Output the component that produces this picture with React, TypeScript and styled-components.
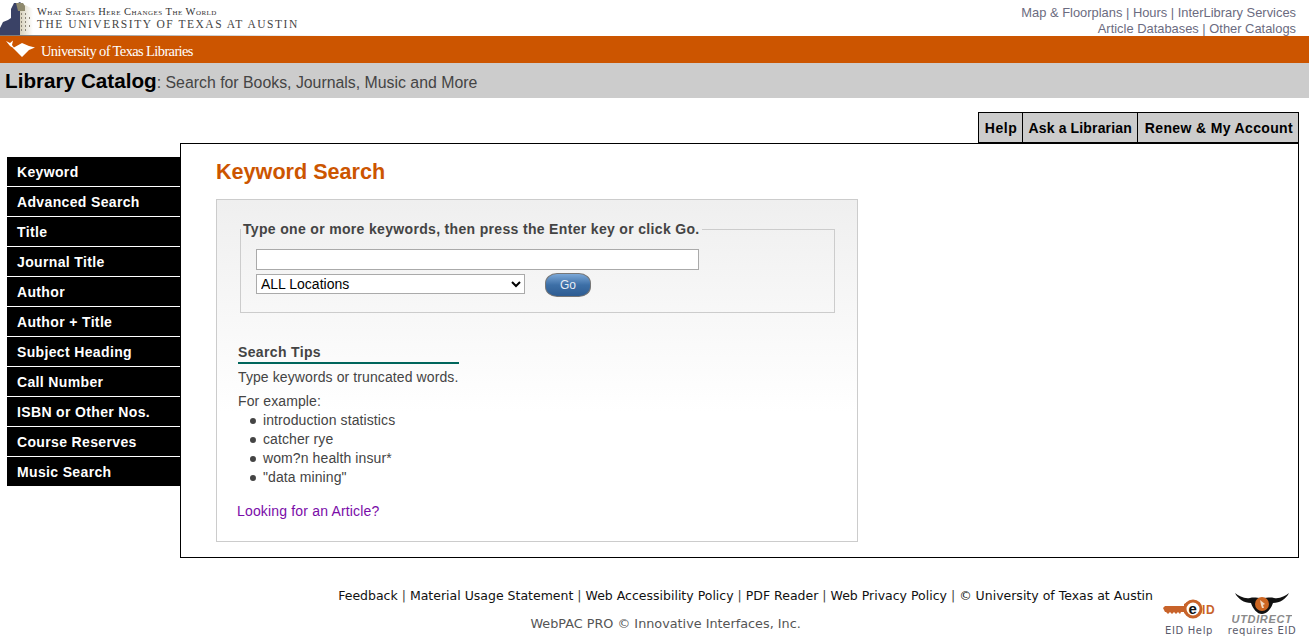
import React from "react";
import styled, { createGlobalStyle } from "styled-components";

const GlobalStyle = createGlobalStyle`
  html, body { margin: 0; padding: 0; background: #fff; }
  body { font-family: "Liberation Sans", Arial, sans-serif; overflow: hidden; }
`;

const TopBar = styled.div`
  height: 36px;
  display: flex;
  justify-content: space-between;
`;

const Brand = styled.div`
  width: 330px;
  display: flex;
  align-items: flex-start;
  background: linear-gradient(90deg, #777, #fff) bottom / 100% 1px no-repeat;
`;

const Wordmark = styled.div`
  margin-left: 1px;
  padding-top: 6px;
  font-family: "Liberation Serif", serif;
  white-space: nowrap;
`;

const Motto = styled.div`
  font-size: 10.5px;
  line-height: 12px;
  letter-spacing: 0.46px;
  font-variant: small-caps;
  color: #333;
`;

const University = styled.div`
  font-size: 11.5px;
  line-height: 13px;
  letter-spacing: 1.52px;
  color: #444;
`;

const TopLinks = styled.div`
  padding: 5px 13px 0 0;
  text-align: right;
  font-size: 12.9px;
  line-height: 16px;
  color: #6b6b80;
`;

const OrangeBar = styled.div`
  height: 27px;
  background: #cc5500;
  display: flex;
  align-items: center;
  padding-left: 6px;
`;

const LibrariesName = styled.span`
  margin-left: 5px;
  padding-top: 3px;
  font-family: "Liberation Serif", serif;
  font-size: 14.5px;
  letter-spacing: -0.62px;
  color: #fff;
`;

const TitleBar = styled.div`
  height: 35px;
  background: #cccccc;
  padding-left: 5px;
  display: flex;
  align-items: baseline;
  line-height: 35px;
`;

const CatalogName = styled.span`
  font-size: 20.7px;
  font-weight: bold;
  color: #000;
`;

const CatalogSub = styled.span`
  font-size: 15.85px;
  color: #444;
`;

const TabRow = styled.div`
  display: flex;
  justify-content: flex-end;
  margin: 14px 10px 0 0;
`;

const Tab = styled.div<{ $left: number; $right: number; $spacing: number }>`
  height: 29px;
  line-height: 30px;
  padding: 0 ${(p) => p.$right}px 0 ${(p) => p.$left}px;
  background: #cccccc;
  border: 1px solid #000;
  margin-left: -1px;
  font-size: 14px;
  font-weight: bold;
  letter-spacing: ${(p) => p.$spacing}px;
  color: #000;
  white-space: nowrap;
`;

const Body = styled.div`
  display: flex;
  align-items: flex-start;
  padding: 0 10px 0 7px;
`;

const SideNav = styled.div`
  width: 173px;
  margin-top: 14px;
  flex: none;
`;

const NavItem = styled.div`
  height: 29px;
  line-height: 30px;
  padding-left: 10px;
  margin-bottom: 1px;
  background: #000;
  color: #fff;
  font-size: 14px;
  font-weight: bold;
  letter-spacing: 0.35px;
`;

const MainBox = styled.div`
  flex: 1;
  height: 415px;
  box-sizing: border-box;
  border: 1px solid #000;
  padding: 16px 0 0 35px;
`;

const Heading = styled.h1`
  margin: 0;
  height: 24px;
  line-height: 24px;
  font-size: 21.6px;
  font-weight: bold;
  color: #cc5500;
`;

const SearchPanel = styled.div`
  margin-top: 15px;
  width: 642px;
  height: 343px;
  box-sizing: border-box;
  border: 1px solid #ccc;
  background: linear-gradient(#efefef, #ffffff 62%);
  padding: 0 0 0 23px;
`;

const Fields = styled.fieldset`
  margin: 21px 0 0 0;
  padding: 0 0 0 15px;
  width: 578px;
  height: 90px;
  box-sizing: content-box;
  border: 1px solid #ccc;
`;

const FieldLegend = styled.legend`
  margin-left: -15px;
  padding: 0 2px;
  font-size: 14px;
  font-weight: bold;
  letter-spacing: 0.33px;
  color: #444;
  line-height: 16px;
`;

const KeywordInput = styled.input`
  display: block;
  width: 443px;
  height: 21px;
  margin: 12px 0 0 0;
  padding: 0;
  box-sizing: border-box;
  border: 1px solid #aaa;
  background: #fff;
`;

const SearchRow = styled.div`
  display: flex;
  align-items: flex-start;
  margin-top: 3px;
`;

const LocationSelect = styled.select`
  width: 269px;
  height: 20px;
  margin-top: 1px;
  padding: 0;
  box-sizing: border-box;
  border: 1px solid #aaa;
  border-radius: 0;
  background: #fff;
  font-family: "Liberation Sans", Arial, sans-serif;
  font-size: 14px;
  color: #000;
`;

const GoButton = styled.button`
  margin-left: 20px;
  width: 46px;
  height: 24px;
  padding: 0;
  border: 1px solid #777;
  border-radius: 12px / 10px;
  background: linear-gradient(#7ba8d8, #3d6fa6 50%, #2d5c92);
  color: #e8eef5;
  font-family: "Liberation Sans", Arial, sans-serif;
  font-size: 12px;
`;

const Tips = styled.div`
  margin: 31px 0 0 -2px;
  font-size: 14px;
  letter-spacing: 0.1px;
  color: #444;
`;

const TipsTitle = styled.div`
  width: 221px;
  height: 18px;
  line-height: 16px;
  border-bottom: 2px solid #00665c;
  font-weight: bold;
  letter-spacing: 0.35px;
  color: #444;
`;

const TipsLine = styled.p<{ $top: number }>`
  margin: 0;
  line-height: 19px;
  padding-top: ${(p) => p.$top}px;
`;

const Examples = styled.ul`
  margin: 0;
  padding: 0 0 0 12px;
  list-style: none;
  line-height: 19px;
`;

const Example = styled.li`
  display: flex;
  align-items: center;
  gap: 7px;

  &::before {
    content: "";
    width: 6px;
    height: 6px;
    border-radius: 50%;
    background: #444;
  }
`;

const ArticleLink = styled.a`
  display: block;
  margin: 15px 0 0 -1px;
  line-height: 19px;
  letter-spacing: 0.17px;
  color: #7a0ca8;
`;

const Footer = styled.div`
  display: flex;
  justify-content: flex-end;
  align-items: stretch;
  height: 59px;
  padding: 26px 12px 0 0;
  box-sizing: content-box;
`;

const FooterText = styled.div`
  margin-right: 8px;
  padding-top: 1px;
  text-align: center;
`;

const FooterLinks = styled.div`
  font-family: "DejaVu Sans", Verdana, sans-serif;
  font-size: 12.5px;
  line-height: 22px;
  color: #111;
  white-space: nowrap;
`;

const Sep = styled.span`
  color: #444;
`;

const Copyright = styled.div`
  margin-top: 9px;
  padding-right: 160px;
  font-family: "DejaVu Sans", Verdana, sans-serif;
  font-size: 12.8px;
  line-height: 16px;
  color: #555;
`;

const Badge = styled.div<{ $w: number; $gap: number }>`
  width: ${(p) => p.$w}px;
  margin-left: ${(p) => p.$gap}px;
  height: 53px;
  display: flex;
  flex-direction: column;
  justify-content: flex-end;
  align-items: center;
  font-family: "DejaVu Sans", Verdana, sans-serif;
  font-size: 10px;
  line-height: 13px;
  letter-spacing: 0.65px;
  color: #5a5a6a;
  white-space: nowrap;
`;

const BadgeArt = styled.svg<{ $below: number }>`
  display: block;
  flex: none;
  margin-bottom: ${(p) => p.$below}px;
`;

function TowerLogo() {
  return (
    <svg width="36" height="35" viewBox="0 0 36 35">
      <defs>
        <linearGradient id="fade" x1="0" x2="1">
          <stop offset="0" stopColor="#d8d2bc" />
          <stop offset="1" stopColor="#fff" />
        </linearGradient>
      </defs>
      <path d="M20 35V5h5l8 4v26z" fill="url(#fade)" />
      <path d="M0 35V28l3-6 5-2 3-2V9l3-6h4l2-1 3 3v3h-3v27z" fill="#3a4266" />
      <path d="M16 3h7l2 3v5h-7z" fill="#8f8a6e" />
      <path d="M21 13h1v2h-1zM21 17h1v2h-1zM21 21h1v2h-1zM21 25h1v2h-1zM21 29h1v2h-1zM25 13h1v2h-1zM25 17h1v2h-1zM25 21h1v2h-1zM25 25h1v2h-1zM25 29h1v2h-1zM29 17h1v2h-1zM29 25h1v2h-1z" fill="#8a8578" />
    </svg>
  );
}

function LonghornMark() {
  return (
    <svg width="30" height="19" viewBox="0 0 30 19">
      <path d="M0 1L4 3 7 0.5 6 5 9 9 4 6z" fill="#fff" />
      <path d="M7 8L16 3 23 6 29 7.5 23 10 16 17 11 12z" fill="#fff" />
    </svg>
  );
}

function EidIcon() {
  return (
    <BadgeArt $below={5} width="52" height="20" viewBox="0 0 52 20">
      <path d="M0 9l2-2h19v-2l4-2v12l-4-1v-1h-3l-1 2-2-2-2 2-2-2-2 2-2-2-2 2-2-2H2z" fill="#c8632a" />
      <circle cx="30" cy="10" r="8" fill="#fff" stroke="#c8632a" strokeWidth="3" />
      <text x="25.5" y="15" fontFamily="Liberation Sans" fontWeight="bold" fontSize="15" fill="#111">e</text>
      <text x="39" y="14.5" fontFamily="Liberation Sans" fontWeight="bold" fontSize="12" fill="#c8632a">ID</text>
    </BadgeArt>
  );
}

function UtDirectIcon() {
  return (
    <BadgeArt $below={0} width="60" height="34" viewBox="0 0 60 34">
      <path d="M3 3c4 3 9 6 15 5 4-1 7 0 12 0s8-1 12 0c6 1 11-2 15-5-3 6-9 10-16 10-2 6-6 11-11 11s-9-5-11-11C12 13 6 9 3 3z" fill="#111" />
      <circle cx="30" cy="14" r="7" fill="#cc6622" />
      <path d="M28 10l5 4-2 1 1 3-2 0-1-3z" fill="#f0d8c0" />
      <text x="30" y="33" textAnchor="middle" fontFamily="Liberation Sans" fontWeight="bold" fontStyle="italic" fontSize="11" fill="#8a8a8a">UTDIRECT</text>
    </BadgeArt>
  );
}

const navItems = [
  "Keyword",
  "Advanced Search",
  "Title",
  "Journal Title",
  "Author",
  "Author + Title",
  "Subject Heading",
  "Call Number",
  "ISBN or Other Nos.",
  "Course Reserves",
  "Music Search",
];

const examples = ["introduction statistics", "catcher rye", "wom?n health insur*", '"data mining"'];

const footerLinks = [
  "Feedback",
  "Material Usage Statement",
  "Web Accessibility Policy",
  "PDF Reader",
  "Web Privacy Policy",
  "© University of Texas at Austin",
];

export default function App() {
  return (
    <>
      <GlobalStyle />
      <TopBar>
        <Brand>
          <TowerLogo />
          <Wordmark>
            <Motto>What Starts Here Changes The World</Motto>
            <University>THE UNIVERSITY OF TEXAS AT AUSTIN</University>
          </Wordmark>
        </Brand>
        <TopLinks>
          <div>Map &amp; Floorplans | Hours | InterLibrary Services</div>
          <div>Article Databases | Other Catalogs</div>
        </TopLinks>
      </TopBar>
      <OrangeBar>
        <LonghornMark />
        <LibrariesName>University of Texas Libraries</LibrariesName>
      </OrangeBar>
      <TitleBar>
        <CatalogName>Library Catalog</CatalogName>
        <CatalogSub>: Search for Books, Journals, Music and More</CatalogSub>
      </TitleBar>
      <TabRow>
        <Tab $left={6} $right={5} $spacing={0.6}>Help</Tab>
        <Tab $left={5} $right={5} $spacing={0.15}>Ask a Librarian</Tab>
        <Tab $left={7} $right={5} $spacing={0.35}>Renew &amp; My Account</Tab>
      </TabRow>
      <Body>
        <SideNav>
          {navItems.map((item) => (
            <NavItem key={item}>{item}</NavItem>
          ))}
        </SideNav>
        <MainBox>
          <Heading>Keyword Search</Heading>
          <SearchPanel>
            <Fields>
              <FieldLegend>Type one or more keywords, then press the Enter key or click Go.</FieldLegend>
              <KeywordInput type="text" />
              <SearchRow>
                <LocationSelect defaultValue="all">
                  <option value="all">ALL Locations</option>
                </LocationSelect>
                <GoButton type="button">Go</GoButton>
              </SearchRow>
            </Fields>
            <Tips>
              <TipsTitle>Search Tips</TipsTitle>
              <TipsLine $top={4}>Type keywords or truncated words.</TipsLine>
              <TipsLine $top={5}>For example:</TipsLine>
              <Examples>
                {examples.map((text) => (
                  <Example key={text}>{text}</Example>
                ))}
              </Examples>
              <ArticleLink>Looking for an Article?</ArticleLink>
            </Tips>
          </SearchPanel>
        </MainBox>
      </Body>
      <Footer>
        <FooterText>
          <FooterLinks>
            {footerLinks.map((link, i) => (
              <React.Fragment key={link}>
                {i > 0 && <Sep> | </Sep>}
                {link}
              </React.Fragment>
            ))}
          </FooterLinks>
          <Copyright>WebPAC PRO © Innovative Interfaces, Inc.</Copyright>
        </FooterText>
        <Badge $w={56} $gap={0}>
          <EidIcon />
          EID Help
        </Badge>
        <Badge $w={70} $gap={10}>
          <UtDirectIcon />
          requires EID
        </Badge>
      </Footer>
    </>
  );
}
